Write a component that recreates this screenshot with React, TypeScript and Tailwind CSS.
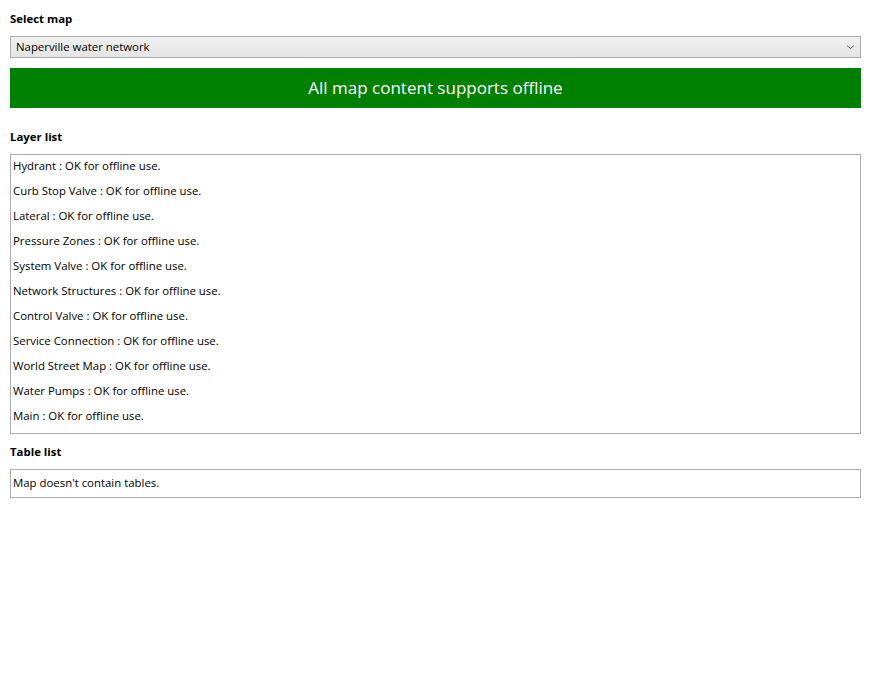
import React from 'react';

const layers = [
  'Hydrant',
  'Curb Stop Valve',
  'Lateral',
  'Pressure Zones',
  'System Valve',
  'Network Structures',
  'Control Valve',
  'Service Connection',
  'World Street Map',
  'Water Pumps',
  'Main',
];

export default function App() {
  return (
    <div className="min-h-[697px] bg-white px-[10px] pt-[11px] text-[11.4px] text-black font-['Open_Sans',sans-serif]">
      <div className="font-bold leading-[16px]">Select map</div>

      <div className="mt-[9px] flex h-[22px] items-center justify-between border border-[#acacac] bg-gradient-to-b from-[#f0f0f0] to-[#e5e5e5] pl-[5px] pr-[4px]">
        <span>Naperville water network</span>
        <svg width="9" height="6" viewBox="0 0 9 6" className="mr-[1px]">
          <path d="M1 1.5 L4.5 4.5 L8 1.5" fill="none" stroke="#606060" strokeWidth="1" />
        </svg>
      </div>

      <div className="mt-[10px] flex h-[40px] items-center justify-center bg-[#008000] text-[17px] text-white">
        All map content supports offline
      </div>

      <div className="mt-[21px] font-bold leading-[16px]">Layer list</div>

      <div className="mt-[9px] border border-[#acacac] pb-[3px] pl-[2px]">
        {layers.map((name) => (
          <div key={name} className="flex h-[25px] items-center pb-[4px]">
            {name} : OK for offline use.
          </div>
        ))}
      </div>

      <div className="mt-[10px] font-bold leading-[16px]">Table list</div>

      <div className="mt-[9px] flex h-[29px] items-center border border-[#acacac] pb-[2px] pl-[2px]">
        Map doesn't contain tables.
      </div>
    </div>
  );
}
